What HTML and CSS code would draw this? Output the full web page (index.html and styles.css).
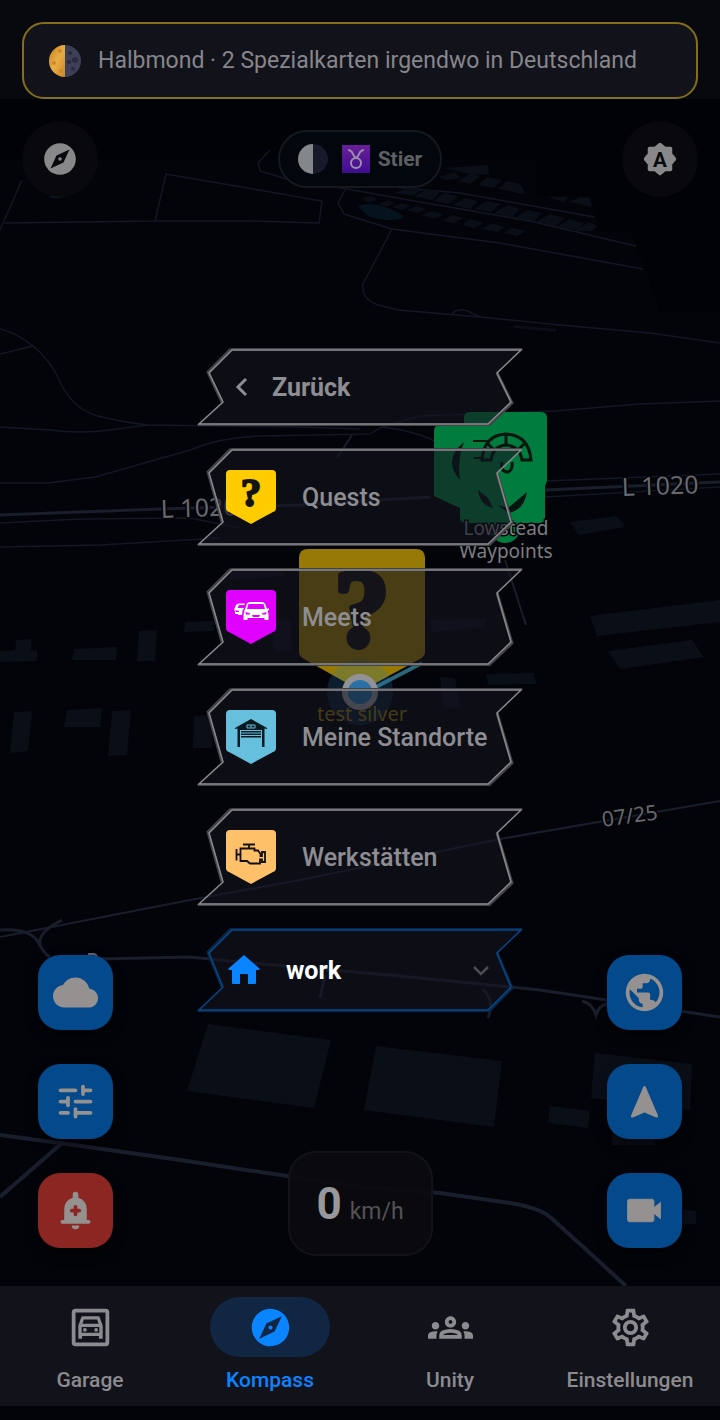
FILE: index.html
```html
<!DOCTYPE html>
<html lang="de">
<head>
    <meta charset="UTF-8">
    <meta name="viewport" content="width=device-width, initial-scale=1.0">
    <title>Kompass</title>
    <link rel="stylesheet" href="styles.css">
</head>
<body>
<div class="app">
    <!-- Map -->
    <svg class="map" viewBox="0 0 720 1420" preserveAspectRatio="xMidYMin slice" aria-hidden="true">
        <path class="land" d="M0 160H535V196H590L600 232H632L660 312H720V1420H0z"/>
        <g class="line">
            <path d="M22 180L0 230M5 223L155 221 250 221 319 223 322 201 166 174 155 221M270 150L258 163 260 171 300 183"/>
            <path d="M345 190L338 203 344 214 392 229 500 243 643 269M392 229L363 284Q361 299 378 305L398 310 480 317 560 325 650 333 720 343M452 315Q455 308 468 311L480 317"/>
            <path d="M330 186L420 202 530 221 636 246M360 184L460 193 594 217"/>
            <path d="M0 329Q15 332 33 346T62 386Q75 410 98 416T148 425L300 427 360 429M0 354L33 346M0 427L50 430Q80 434 110 430L148 425"/>
            <path d="M0 483H48L95 477 190 450Q220 437 260 436L370 434 382 427 420 416 555 411 640 404 720 401M382 427Q420 432 436 442M0 523L80 519 190 518 240 528M0 547L100 545 220 538M545 481L720 474M545 497L720 487"/>
        </g>
        <path class="road thin" d="M352 435L337 458M505 560L526 625"/>
        <path class="road" d="M0 515L160 509 300 505 430 497M545 490L720 482"/>
        <path class="road thin" d="M0 937L190 900 300 880 500 839 720 801"/>
        <path class="road" d="M0 930Q30 928 38 942T50 957M62 920Q38 932 40 944M100 959L190 957 250 963 400 976 540 990 720 1017M320 998L325 975M483 989Q495 1001 488 1018M582 1001Q592 1003 596 1015Q600 1003 610 1004"/>
        <path class="road wide" d="M0 1135L60 1143 180 1160 360 1187 440 1193 510 1203Q540 1208 550 1217L580 1244 626 1286M62 1143L0 1197"/>
        <g class="block">
            <path d="M208 1024L331 1040 314 1108 187 1091zM376 1046L502 1061 494 1127 364 1110zM595 1053L692 1064 690 1110 591 1098zM550 1106L590 1111 588 1128 548 1123zM612 1130H655V1145H612zM683 1209L696 1211V1224H683z"/>
            <path d="M0 651L15 650 16 640 31 639V651L37 650V661L0 662zM74 649L117 647 116 660 72 660zM139 631L157 630 155 661 137 661zM185 622L214 621V631L184 632z"/>
            <path d="M14 712L32 711 28 751 10 753zM67 710L102 708 100 727 64 727zM112 711L131 710 127 755 108 756zM194 716L213 715 212 748H193z"/>
            <path d="M570 522L617 516 625 527 579 535zM590 616L720 600V622L597 636zM608 651L692 640 704 657 620 669zM486 674L534 673 536 684 488 685zM440 677L455 678 460 708 443 707zM430 620L486 618 485 627 431 632zM272 620L290 619 292 651H274zM230 570L283 568 284 576 230 580zM514 325L556 329V332L514 328z"/>
            <path d="M445 168L488 165 489 175 470 174zM438 177L455 172 460 178 446 180zM458 181L470 174 480 176 470 184zM478 185L488 177 502 180 494 188zM498 189L507 181 520 184 516 192zM515 193L520 184 526 194zM395 193L410 187 422 190 412 196zM414 196L428 189 440 192 432 200zM433 201L445 193 458 197 448 204zM453 205L465 198 478 201 470 209zM474 209L487 201 501 204 491 212zM494 213L508 205 520 209 512 217zM515 218L528 210 542 213 534 221zM536 222L550 214 565 218 556 226zM557 227L570 219 584 223 577 230zM575 231L589 222 597 226 592 231z"/>
            <path d="M362 198L372 196 377 200 368 203zM378 204L388 200 395 203 386 207zM392 207L402 203 411 206 402 210zM406 210L416 206 426 209 417 213zM421 215L433 211 443 215 434 219zM442 221L452 215 465 218 454 223zM462 225L470 219 484 223 474 228zM482 229L492 223 505 227 497 232zM503 233L512 228 526 231 517 236zM548 197L568 197 564 202zM569 202L580 197 590 198 592 207z"/>
        </g>
        <path class="pond" d="M358 206Q370 201 390 209T400 219Q385 222 368 216zM48 196Q56 201 66 196z"/>
        <g class="road-label">
            <text x="161" y="518" transform="rotate(-2 161 518)">L 1020</text>
            <text x="622" y="496" transform="rotate(-2 622 496)">L 1020</text>
            <text class="small" x="603" y="827" transform="rotate(-8 603 827)">07/25</text>
            <text class="small" x="86" y="969">P</text>
        </g>

        <!-- waypoint markers -->
        <path fill="#007d3e" d="M470 412H541Q547 412 547 418V481L545 486V518Q545 523 540 523H524Q518 543 505 543T488 523H466Q460 523 460 517V508L434 496V431Q434 425 440 425H464V418Q464 412 470 412z"/>
        <g fill="none" stroke="#04150f">
            <path stroke-width="3" d="M482 460Q484 435 506 434 529 435 531 460H522Q520 446 506 445 493 446 491 460z"/>
            <path stroke-width="3" d="M488 444L495 451M506 434V445M524 444L517 451M502 462Q500 472 508 472 513 470 512 462"/>
            <path stroke-width="2" d="M473 441H490M476 449H486M474 458H482"/>
        </g>
        <path fill="#04150f" d="M464 442Q442 460 460 480 457 460 464 442zM478 490Q480 505 493 508L488 498zM497 505L508 508 527 492Q524 510 509 513z"/>
        <g class="marker-label"><text x="506" y="535">Lowstead</text><text x="506" y="558">Waypoints</text></g>
        <path class="cone" d="M372 689L422 663"/>
        <path fill="#967a05" d="M308 549H416Q425 549 425 558V652Q425 656 420 659L361 691 304 659Q299 656 299 652V558Q299 549 308 549z"/>
        <text class="quest-sign" x="362" y="645" font-size="110" stroke-width="6">?</text>
        <circle cx="360" cy="692" r="33" fill="#2b7cb5" opacity=".22"/>
        <circle cx="360" cy="692" r="15" fill="#2870a5" stroke="#929296" stroke-width="6"/>
        <text class="marker-label own" x="362" y="721">test silver</text>
    </svg>

    <header class="header">
        <div class="banner">
            <svg class="moon" viewBox="0 0 36 36" aria-hidden="true">
                <defs>
                    <linearGradient id="sunny" x1="0" y1="0" x2="1" y2="1"><stop offset="0" stop-color="#c97d12"/><stop offset=".5" stop-color="#e8ad48"/><stop offset="1" stop-color="#d08524"/></linearGradient>
                </defs>
                <circle cx="18" cy="18" r="16" fill="#3c3f55"/>
                <path d="M18 2a16 16 0 0 0 0 32z" fill="url(#sunny)"/>
                <g fill="#292c40"><circle cx="23" cy="10" r="2"/><circle cx="28" cy="17" r="3"/><circle cx="22" cy="19" r="2"/><circle cx="26" cy="26" r="2"/></g>
                <g fill="#cf8a26"><circle cx="13" cy="8" r="2"/><circle cx="7" cy="20" r="2"/><circle cx="14" cy="28" r="2"/></g>
            </svg>
            <span>Halbmond · 2 Spezialkarten irgendwo in Deutschland</span>
        </div>
    </header>

    <div class="topbar">
        <button class="round-btn" aria-label="Kompass ausrichten">
            <svg viewBox="0 0 24 24"><path d="M12 10.900c-.61 0-1.100.49-1.100 1.100s.49 1.100 1.100 1.100c.61 0 1.100-.49 1.100-1.100s-.49-1.100-1.100-1.100zM12 2C6.480 2 2 6.480 2 12s4.480 10 10 10 10-4.480 10-10S17.520 2 12 2zm2.190 12.190L6 18l3.810-8.190L18 6l-3.810 8.190z"/></svg>
        </button>
        <button class="zodiac">
            <svg class="phase" viewBox="0 0 30 30"><circle cx="15" cy="15" r="15" fill="#161a2a"/><path d="M15 0a15 15 0 0 0 0 30z" fill="#85868a"/></svg>
            <svg class="sign" viewBox="0 0 28 28">
                <defs><linearGradient id="violet" x1="0" y1="0" x2="0" y2="1"><stop offset="0" stop-color="#6a1f97"/><stop offset="1" stop-color="#3f0c93"/></linearGradient></defs>
                <rect width="28" height="28" fill="url(#violet)"/>
                <path d="M7 5Q10 6 11 9T14 13Q16 12 17 9T21 5" fill="none" stroke="#9c8fa8" stroke-width="2" stroke-linecap="round"/>
                <circle cx="14" cy="18" r="5" fill="none" stroke="#9c8fa8" stroke-width="2"/>
            </svg>
            <span>Stier</span>
        </button>
        <button class="round-btn" aria-label="Automatische Helligkeit">
            <svg viewBox="0 0 24 24"><path d="M12 3l3 2.500H18.500V9L21 12l-2.500 3v3.500H15L12 21l-3-2.500H5.500V15L3 12l2.500-3V5.500H9z" stroke="#88888a" stroke-width="2.500" stroke-linejoin="round"/><text class="auto" x="12" y="17">A</text></svg>
        </button>
    </div>

    <main class="stage">
        <div class="side">
            <button class="tile" aria-label="Wetter"><svg viewBox="0 0 24 24"><path d="M19.350 10.040C18.670 6.590 15.640 4 12 4 9.110 4 6.600 5.640 5.350 8.040 2.340 8.360 0 10.910 0 14c0 3.310 2.690 6 6 6h13c2.760 0 5-2.240 5-5 0-2.640-2.050-4.780-4.650-4.960z"/></svg></button>
            <button class="tile" aria-label="Filter"><svg class="stroked" viewBox="0 0 24 24"><path d="M4 6h8M16 4v4M16 6h4M4 12h4M8 10v4M12 12h8M4 18h4M12 16v4M12 18h8"/></svg></button>
            <button class="tile alert" aria-label="Warnung hinzufügen"><svg viewBox="0 0 24 24"><path d="M6 18v-7a6 6 0 0 1 4.500-5.800V3.500a1.500 1.500 0 0 1 3 0v1.700A6 6 0 0 1 18 11v7zM10 20h4a2 2 0 0 1-4 0z"/><path d="M5 18h14" stroke="#949190" stroke-width="2" stroke-linecap="round"/><path d="M12 10v4M10 12h4" stroke="#8c2622" stroke-width="2" stroke-linecap="round"/></svg></button>
        </div>

        <div class="center">
            <nav class="menu">
                <button class="menu-item back">
                    <svg class="frame" viewBox="0 0 326 78"><path class="fill" d="M35 2H324L300 25 314 54 291 76H2L26 54 12 25z"/><path class="outer" d="M34 1H325M34 1L11 24 25 54M300 25L315 55 292 77H1"/><path class="inner" d="M35 2H324L300 25 314 54 291 76H2L26 54 12 25z"/></svg>
                    <svg class="glyph" viewBox="0 0 32 32"><path d="M20 8L12 16l8 8" fill="none" stroke="#8d8d92" stroke-width="3"/></svg>
                    <span>Zurück</span>
                </button>
                <button class="menu-item">
                    <svg class="frame" viewBox="0 0 326 98"><path class="fill" d="M35 2H324L300 25 314 74 291 96H2L26 74 12 25z"/><path class="outer" d="M34 1H325M34 1L11 24 25 74M300 25L315 75 292 97H1"/><path class="inner" d="M35 2H324L300 25 314 74 291 96H2L26 74 12 25z"/></svg>
                    <svg class="badge" viewBox="0 0 50 54"><path fill="#ffcc00" d="M4 0H46Q50 0 50 4V38Q50 41 47 42L25 54 3 42Q0 41 0 38V4Q0 0 4 0z"/><text class="quest-sign" x="25" y="36" font-size="41" stroke-width="2">?</text></svg>
                    <span>Quests</span>
                </button>
                <button class="menu-item">
                    <svg class="frame" viewBox="0 0 326 98"><path class="fill" d="M35 2H324L300 25 314 74 291 96H2L26 74 12 25z"/><path class="outer" d="M34 1H325M34 1L11 24 25 74M300 25L315 75 292 97H1"/><path class="inner" d="M35 2H324L300 25 314 74 291 96H2L26 74 12 25z"/></svg>
                    <svg class="badge" viewBox="0 0 50 54"><path fill="#e000ff" d="M4 0H46Q50 0 50 4V38Q50 41 47 42L25 54 3 42Q0 41 0 38V4Q0 0 4 0z"/>
                        <path fill="#fff" d="M18 22L21 13.500Q22 12 24 12H36Q38 12 39 13.500L41 19 43 18V20L41.500 21Q42.500 23 42.500 25V30H38.500V28H21.500V30H17.500V25Q17.500 23 18.500 22zM8 20L10 15Q11 13.500 13 13.500H19L18.500 15H13L11.500 18H18L16.500 21 16 25H12V24H9V21z"/>
                        <path fill="#e000ff" d="M22.500 14H37.500L39 19H21zM19.500 22L24 23.500V24.500H20zM40.500 22L36 23.500V24.500H40zM26 25H34L33 27H27zM9.500 20L13 21V22H10z"/></svg>
                    <span>Meets</span>
                </button>
                <button class="menu-item">
                    <svg class="frame" viewBox="0 0 326 98"><path class="fill" d="M35 2H324L300 25 314 74 291 96H2L26 74 12 25z"/><path class="outer" d="M34 1H325M34 1L11 24 25 74M300 25L315 75 292 97H1"/><path class="inner" d="M35 2H324L300 25 314 74 291 96H2L26 74 12 25z"/></svg>
                    <svg class="badge" viewBox="0 0 50 54"><path fill="#65bfdd" d="M4 0H46Q50 0 50 4V38Q50 41 47 42L25 54 3 42Q0 41 0 38V4Q0 0 4 0z"/>
                        <path fill="#071a22" d="M25 9L41 18V19L38.500 18.500V37H36V20H14V37H11.500V18.500L9 19V18zM15 21H35V22.500H15zM15 23.500H35V25H15zM15 26H35V27.500H15z"/><path d="M21 15h8v3h-8zM25 15v3" fill="none" stroke="#65bfdd"/></svg>
                    <span>Meine Standorte</span>
                </button>
                <button class="menu-item">
                    <svg class="frame" viewBox="0 0 326 98"><path class="fill" d="M35 2H324L300 25 314 74 291 96H2L26 74 12 25z"/><path class="outer" d="M34 1H325M34 1L11 24 25 74M300 25L315 75 292 97H1"/><path class="inner" d="M35 2H324L300 25 314 74 291 96H2L26 74 12 25z"/></svg>
                    <svg class="badge" viewBox="0 0 50 54"><path fill="#ffc06a" d="M4 0H46Q50 0 50 4V38Q50 41 47 42L25 54 3 42Q0 41 0 38V4Q0 0 4 0z"/>
                        <path d="M17 14.500H29M23 14.500V18M14.500 18.500H28.500V20.500H32L34.500 24V26H36V22H39V32H36V29.500H34V33.500H24L21 31H14.500zM10.500 19V30.500M10.500 24.500H14" fill="none" stroke="#15100a" stroke-width="1.800"/></svg>
                    <span>Werkstätten</span>
                </button>
                <button class="menu-item place" aria-expanded="false">
                    <svg class="frame" viewBox="0 0 326 84"><path class="fill" d="M35 2H324L300 25 314 59 291 82H2L26 59 12 25z"/><path class="outer" d="M34 1H325M34 1L11 24 25 59M300 25L315 60 292 83H1"/><path class="inner" d="M35 2H324L300 25 314 59 291 82H2L26 59 12 25z"/></svg>
                    <svg class="glyph" viewBox="0 0 32 32"><path fill="#0a84ff" d="M16 1L32 15 31 16H28V29Q28 30 27 30H20V20H12V30H5Q4 30 4 29V16H1L0 15z"/></svg>
                    <span>work</span>
                    <svg class="chevron" viewBox="0 0 20 20"><path d="M3 7l7 7 7-7" fill="none" stroke="#4b4b52" stroke-width="2.500"/></svg>
                </button>
            </nav>
            <div class="speed"><strong>0</strong><span>km/h</span></div>
        </div>

        <div class="side">
            <button class="tile" aria-label="Weltkarte"><svg viewBox="0 0 24 24"><path d="M12 2C6.480 2 2 6.480 2 12s4.480 10 10 10 10-4.480 10-10S17.520 2 12 2zm-1 17.930c-3.950-.49-7-3.850-7-7.930 0-.62.08-1.210.21-1.790L9 15v1c0 1.100.9 2 2 2v1.930zm6.900-2.540c-.26-.81-1-1.390-1.900-1.390h-1v-3c0-.55-.45-1-1-1H8v-2h2c.55 0 1-.45 1-1V7h2c1.100 0 2-.9 2-2v-.41c2.930 1.190 5 4.060 5 7.410 0 2.080-.8 3.970-2.100 5.390z"/></svg></button>
            <button class="tile" aria-label="Navigation"><svg viewBox="0 0 24 24"><path d="M12 4.500L18.500 19.800 12 17 5.500 19.800z" stroke="#949190" stroke-width="1.500" stroke-linejoin="round"/></svg></button>
            <button class="tile" aria-label="Kamera"><svg viewBox="0 0 24 24"><path d="M17 10.500V7c0-.55-.45-1-1-1H4c-.55 0-1 .45-1 1v10c0 .55.45 1 1 1h12c.55 0 1-.45 1-1v-3.500l3.500 2.800V7.700z" stroke="#949190" stroke-width=".5" stroke-linejoin="round"/></svg></button>
        </div>
    </main>

    <nav class="tabs">
        <a class="tab" href="#garage">
            <span class="tab-icon"><svg viewBox="0 0 24 24"><rect x="3" y="3" width="18" height="18" rx="1" fill="none" stroke="currentColor" stroke-width="2"/><path fill-rule="evenodd" d="M8 6H16Q16.800 6 17 6.700L18.500 11V18H16.500V16.500H7.500V18H5.500V11L7 6.700Q7.200 6 8 6zM8.500 7.700L7.700 10H16.300L15.500 7.700zM7.300 11.700V14.800H16.700V11.700z"/><circle cx="9" cy="13.200" r="1"/><circle cx="15" cy="13.200" r="1"/></svg></span>
            <span>Garage</span>
        </a>
        <a class="tab active" href="#kompass">
            <span class="tab-icon"><svg viewBox="0 0 24 24"><path d="M12 10.900c-.61 0-1.100.49-1.100 1.100s.49 1.100 1.100 1.100c.61 0 1.100-.49 1.100-1.100s-.49-1.100-1.100-1.100zM12 2C6.480 2 2 6.480 2 12s4.480 10 10 10 10-4.480 10-10S17.520 2 12 2zm2.190 12.190L6 18l3.810-8.190L18 6l-3.810 8.190z"/></svg></span>
            <span>Kompass</span>
        </a>
        <a class="tab" href="#unity">
            <span class="tab-icon"><svg viewBox="0 0 24 24"><path d="M4 13c1.100 0 2-.9 2-2s-.9-2-2-2-2 .9-2 2 .9 2 2 2zm1.130 1.100c-.37-.06-.74-.1-1.130-.1-.99 0-1.930.21-2.780.58C.48 14.900 0 15.620 0 16.430V18h4.500v-1.610c0-.83.23-1.610.63-2.290zM20 13c1.100 0 2-.9 2-2s-.9-2-2-2-2 .9-2 2 .9 2 2 2zm4 3.430c0-.81-.48-1.530-1.220-1.850-.85-.37-1.790-.58-2.780-.58-.39 0-.76.04-1.130.1.4.68.63 1.460.63 2.290V18H24v-1.570zm-7.760-2.780c-1.170-.52-2.610-.9-4.240-.9s-3.070.39-4.240.9C6.680 14.130 6 15.210 6 16.390V18h12v-1.610c0-1.180-.68-2.260-1.760-2.740zM8.070 16c.09-.23.13-.39.91-.69.97-.38 1.990-.56 3.020-.56s2.050.18 3.020.56c.77.3.81.46.91.69H8.070zM12 8c.55 0 1 .45 1 1s-.45 1-1 1-1-.45-1-1 .45-1 1-1m0-2c-1.660 0-3 1.340-3 3s1.340 3 3 3 3-1.340 3-3-1.340-3-3-3z"/></svg></span>
            <span>Unity</span>
        </a>
        <a class="tab" href="#einstellungen">
            <span class="tab-icon"><svg viewBox="0 0 24 24"><path d="M19.430 12.980c.04-.32.07-.64.07-.98 0-.34-.03-.66-.07-.98l2.110-1.650c.19-.15.24-.42.12-.64l-2-3.460c-.09-.16-.26-.25-.44-.25-.06 0-.12.01-.17.03l-2.490 1c-.52-.4-1.080-.73-1.690-.98l-.38-2.650C14.460 2.180 14.250 2 14 2h-4c-.25 0-.46.18-.49.42l-.38 2.650c-.61.25-1.170.59-1.690.98l-2.490-1c-.06-.02-.12-.03-.18-.03-.17 0-.34.09-.43.25l-2 3.460c-.13.22-.07.49.12.64l2.110 1.650c-.04.32-.07.65-.07.98 0 .33.03.66.07.98l-2.110 1.650c-.19.15-.24.42-.12.64l2 3.460c.09.16.26.25.44.25.06 0 .12-.01.17-.03l2.490-1c.52.4 1.080.73 1.690.98l.38 2.650c.03.24.24.42.49.42h4c.25 0 .46-.18.49-.42l.38-2.650c.61-.25 1.170-.59 1.690-.98l2.490 1c.06.02.12.03.18.03.17 0 .34-.09.43-.25l2-3.460c.12-.22.07-.49-.12-.64l-2.110-1.650zm-1.980-1.710c.04.31.05.52.05.73 0 .21-.02.43-.05.73l-.14 1.130.89.7 1.080.84-.7 1.210-1.270-.51-1.040-.42-.9.68c-.43.32-.84.56-1.250.73l-1.060.43-.16 1.130-.2 1.350h-1.400l-.19-1.350-.16-1.130-1.060-.43c-.43-.18-.83-.41-1.230-.71l-.91-.7-1.060.43-1.270.51-.7-1.210 1.080-.84.89-.7-.14-1.130c-.03-.31-.05-.54-.05-.74s.02-.43.05-.73l.14-1.130-.89-.7-1.080-.84.7-1.210 1.270.51 1.040.42.9-.68c.43-.32.84-.56 1.250-.73l1.060-.43.16-1.130.2-1.350h1.390l.19 1.350.16 1.130 1.060.43c.43.18.83.41 1.230.71l.91.7 1.060-.43 1.270-.51.7 1.210-1.070.85-.89.7.14 1.130zM12 8c-2.210 0-4 1.790-4 4s1.790 4 4 4 4-1.790 4-4-1.790-4-4-4zm0 6c-1.100 0-2-.9-2-2s.9-2 2-2 2 .9 2 2-.9 2-2 2z"/></svg></span>
            <span>Einstellungen</span>
        </a>
    </nav>
</div>
</body>
</html>
```

FILE: styles.css
```css
* {
    box-sizing: border-box;
}
body {
    margin: 0;
    background-color: #000;
    font-family: Roboto, "Noto Sans", sans-serif;
    color: #8b8b90;
}
button {
    padding: 0;
    border: none;
    background: none;
    font-family: inherit;
    color: inherit;
    cursor: pointer;
}
svg {
    display: block;
    flex: none;
}

.app {
    position: relative;
    display: flex;
    flex-direction: column;
    min-height: 100vh;
    padding-bottom: 14px;
    overflow: hidden;
    background-color: #000;
}
.header, .topbar, .stage, .tabs {
    position: relative;
}

/* map layer */
.map {
    position: absolute;
    top: 0;
    left: 0;
    width: 100%;
    height: 100%;
    background-color: #010206;
}
.land {
    fill: #030409;
}
.line {
    fill: none;
    stroke: #121725;
    stroke-width: 1.5;
}
.road {
    fill: none;
    stroke: #191e2d;
    stroke-width: 3;
}
.road.thin {
    stroke-width: 2;
}
.road.wide {
    stroke-width: 4;
}
.block {
    fill: #0a0e17;
}
.pond {
    fill: #05131e;
}
.road-label {
    font-family: "Noto Sans", sans-serif;
    font-size: 25px;
    fill: #66686c;
}
.road-label text {
    stroke: #030409;
    stroke-width: 3;
    paint-order: stroke;
}
.road-label .small {
    font-size: 21px;
}
.marker-label {
    font-family: "Noto Sans", sans-serif;
    font-size: 19px;
    fill: #7d7d80;
    text-anchor: middle;
    stroke: #030409;
    stroke-width: 3;
    paint-order: stroke;
}
.marker-label.own {
    font-size: 20px;
    fill: #8f750a;
    stroke: none;
}
.quest-sign {
    font-family: "Liberation Serif", serif;
    font-weight: bold;
    text-anchor: middle;
    fill: #14130f;
    stroke: #14130f;
    stroke-linejoin: round;
}
.cone {
    stroke: #2d6678;
    stroke-width: 4;
}

/* moon banner */
.header {
    padding: 22px 22px 0;
    background-color: #08090f;
}
.banner {
    display: flex;
    align-items: center;
    gap: 15px;
    height: 77px;
    padding: 0 23px;
    border: 2px solid #84701a;
    border-radius: 22px;
    background-color: #12121a;
    font-size: 23px;
    color: #86868c;
    white-space: nowrap;
}
.moon {
    width: 36px;
    height: 36px;
}

.topbar {
    display: flex;
    justify-content: space-between;
    align-items: center;
    padding: 22px 22px 0;
}
.round-btn {
    display: grid;
    place-items: center;
    width: 76px;
    height: 76px;
    border-radius: 50%;
    background-color: #09090d;
}
.round-btn svg {
    width: 38px;
    height: 38px;
    fill: #88888a;
}
.round-btn .auto {
    font-size: 13px;
    font-weight: bold;
    text-anchor: middle;
    fill: #09090d;
}
.zodiac {
    display: flex;
    align-items: center;
    height: 58px;
    padding: 0 18px;
    border: 2px solid #15181d;
    border-radius: 29px;
    background-color: #02060d;
    font-size: 21px;
    font-weight: bold;
    color: #5d5f62;
}
.phase {
    width: 30px;
    height: 30px;
    margin-right: 14px;
}
.sign {
    width: 28px;
    height: 28px;
    margin-right: 8px;
}

/* menu and side buttons */
.stage {
    flex: 1;
    display: grid;
    grid-template-columns: 75px 1fr 75px;
    padding: 151px 38px 30px;
}
.side {
    display: flex;
    flex-direction: column;
    justify-content: flex-end;
    gap: 34px;
    padding-bottom: 8px;
}
.tile {
    display: grid;
    place-items: center;
    width: 75px;
    height: 75px;
    border-radius: 22px;
    background-color: #03498b;
    box-shadow: 0 6px 12px rgba(0, 0, 0, 0.5);
}
.tile.alert {
    background-color: #8c2622;
}
.tile svg {
    width: 45px;
    height: 45px;
    fill: #949190;
}
.tile .stroked {
    fill: none;
    stroke: #949190;
    stroke-width: 2;
    stroke-linecap: round;
}
.center {
    display: flex;
    flex-direction: column;
    align-items: center;
    justify-content: space-between;
}
.menu {
    display: flex;
    flex-direction: column;
    gap: 22px;
    width: 326px;
}
.menu-item {
    position: relative;
    display: flex;
    align-items: center;
    gap: 26px;
    height: 98px;
    padding: 0 32px 0 29px;
    font-size: 25px;
    font-weight: 500;
    color: #8d8d92;
}
.menu-item span, .menu-item .badge, .menu-item .glyph, .menu-item .chevron {
    position: relative;
}
.menu-item.back {
    height: 78px;
    gap: 14px;
    font-weight: bold;
}
.menu-item.place {
    height: 84px;
    padding-left: 31px;
    font-weight: bold;
    color: #fff;
}
.frame {
    position: absolute;
    top: 0;
    left: 0;
    width: 100%;
    height: 100%;
    fill: none;
}
.frame .fill {
    fill: rgba(20, 20, 32, 0.6);
}
.frame .outer {
    stroke: #424247;
    stroke-width: 3;
}
.frame .inner {
    stroke: #88888d;
    stroke-width: 1.5;
}
.place .outer {
    stroke: #082849;
}
.place .inner {
    stroke: #0a4684;
}
.badge {
    width: 50px;
    height: 54px;
}
.glyph {
    width: 32px;
    height: 32px;
}
.chevron {
    width: 20px;
    height: 20px;
    margin-left: auto;
}
.speed {
    display: flex;
    align-items: baseline;
    justify-content: center;
    gap: 8px;
    width: 145px;
    height: 105px;
    padding-top: 24px;
    border: 2px solid #121217;
    border-radius: 28px;
    background-color: rgba(10, 10, 15, 0.9);
}
.speed strong {
    font-size: 44px;
    line-height: 54px;
    color: #98989b;
}
.speed span {
    font-size: 23px;
    color: #535356;
}

/* bottom navigation */
.tabs {
    display: grid;
    grid-template-columns: repeat(4, 1fr);
    height: 120px;
    padding-top: 11px;
    background-color: #12121a;
}
.tab {
    display: flex;
    flex-direction: column;
    align-items: center;
    gap: 11px;
    font-size: 21px;
    line-height: 24px;
    font-weight: 500;
    color: #8b8b90;
    text-decoration: none;
}
.tab-icon {
    display: grid;
    place-items: center;
    width: 120px;
    height: 60px;
    border-radius: 30px;
}
.tab-icon svg {
    width: 45px;
    height: 45px;
    fill: currentColor;
}
.tab.active {
    color: #0a84ff;
}
.tab.active .tab-icon {
    background-color: #102642;
}
```
